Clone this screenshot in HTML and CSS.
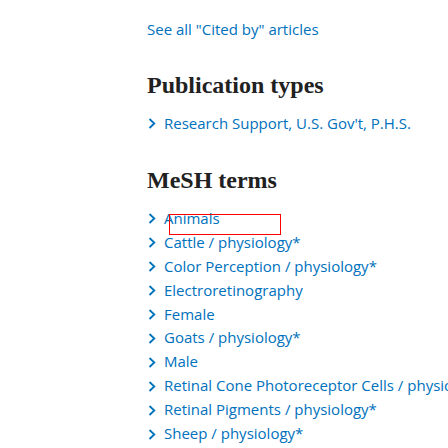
FILE: index.html
```html
<!DOCTYPE html>
<html>
<head>
<meta charset="utf-8">
<link rel="stylesheet" href="styles.css">
</head>
<body>
<main class="page">
  <section class="cited">
    <a class="link" href="#">See all "Cited by" articles</a>
  </section>
  <section class="block">
    <h2 class="heading">Publication types</h2>
    <ul class="terms">
      <li><svg class="chev" viewBox="0 0 8 11"><path d="M1.5 1 L6.3 5.5 L1.5 10"/></svg><a class="link" href="#">Research Support, U.S. Gov't, P.H.S.</a></li>
    </ul>
  </section>
  <section class="block">
    <h2 class="heading">MeSH terms</h2>
    <ul class="terms">
      <li><svg class="chev" viewBox="0 0 8 11"><path d="M1.5 1 L6.3 5.5 L1.5 10"/></svg><a class="link" href="#">Animals</a><span class="highlight"></span></li>
      <li><svg class="chev" viewBox="0 0 8 11"><path d="M1.5 1 L6.3 5.5 L1.5 10"/></svg><a class="link" href="#">Cattle / physiology*</a></li>
      <li><svg class="chev" viewBox="0 0 8 11"><path d="M1.5 1 L6.3 5.5 L1.5 10"/></svg><a class="link" href="#">Color Perception / physiology*</a></li>
      <li><svg class="chev" viewBox="0 0 8 11"><path d="M1.5 1 L6.3 5.5 L1.5 10"/></svg><a class="link" href="#">Electroretinography</a></li>
      <li><svg class="chev" viewBox="0 0 8 11"><path d="M1.5 1 L6.3 5.5 L1.5 10"/></svg><a class="link" href="#">Female</a></li>
      <li><svg class="chev" viewBox="0 0 8 11"><path d="M1.5 1 L6.3 5.5 L1.5 10"/></svg><a class="link" href="#">Goats / physiology*</a></li>
      <li><svg class="chev" viewBox="0 0 8 11"><path d="M1.5 1 L6.3 5.5 L1.5 10"/></svg><a class="link" href="#">Male</a></li>
      <li><svg class="chev" viewBox="0 0 8 11"><path d="M1.5 1 L6.3 5.5 L1.5 10"/></svg><a class="link" href="#">Retinal Cone Photoreceptor Cells / physiology*</a></li>
      <li><svg class="chev" viewBox="0 0 8 11"><path d="M1.5 1 L6.3 5.5 L1.5 10"/></svg><a class="link" href="#">Retinal Pigments / physiology*</a></li>
      <li><svg class="chev" viewBox="0 0 8 11"><path d="M1.5 1 L6.3 5.5 L1.5 10"/></svg><a class="link" href="#">Sheep / physiology*</a></li>
    </ul>
  </section>
</main>
</body>
</html>
```
FILE: styles.css
```css
html, body {
  margin: 0;
  padding: 0;
  background: #ffffff;
  overflow: hidden;
  height: 448px;
}
.page {
  padding: 19px 0 0 147px;
  font-family: "Open Sans", "Noto Sans", sans-serif;
  font-size: 15px;
  white-space: nowrap;
}
.link {
  color: #0071bc;
  text-decoration: none;
}
.cited {
  line-height: 20px;
  margin-bottom: 32px;
}
.heading {
  font-family: "Liberation Serif", "Times New Roman", serif;
  font-weight: bold;
  font-size: 24px;
  line-height: 28px;
  color: #212121;
  margin: 0 0 13px 0;
}
.block {
  margin-bottom: 30px;
}
.terms {
  list-style: none;
  margin: 0;
  padding: 0;
  font-size: 15px;
  line-height: 23.9px;
}
.terms li {
  display: flex;
  align-items: center;
  gap: 8px;
  position: relative;
  padding-left: 1px;
}
.chev {
  width: 8px;
  height: 11px;
  flex: none;
  fill: none;
  stroke: #0071bc;
  stroke-width: 1.8;
}
.highlight {
  position: absolute;
  left: 22px;
  top: 7px;
  width: 110px;
  height: 19px;
  border: 1px solid #ff0000;
}
```
